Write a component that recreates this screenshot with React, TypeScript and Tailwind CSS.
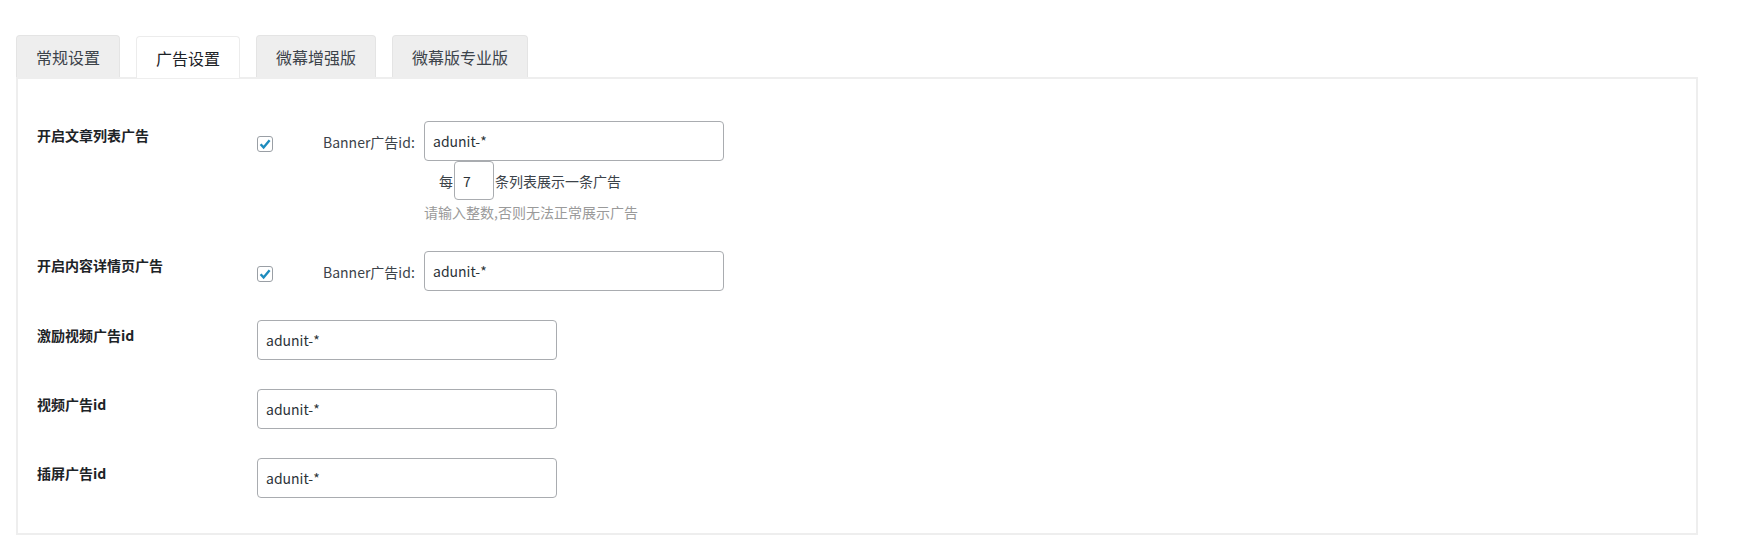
import React from "react";

function Checkbox() {
  return (
    <div className="mt-[15px] flex h-[16px] w-[16px] shrink-0 items-center justify-center rounded-[3px] border border-[#9a9fa5] bg-white">
      <svg width="14" height="14" viewBox="0 0 14 14">
        <polyline
          points="2.6,7.2 5.6,10.4 11.6,3.2"
          fill="none"
          stroke="#1e8cbe"
          strokeWidth="2.4"
          strokeLinecap="butt"
          strokeLinejoin="miter"
        />
      </svg>
    </div>
  );
}

function TextInput({ value, className = "" }: { value: string; className?: string }) {
  return (
    <input
      readOnly
      value={value}
      className={
        "box-border rounded-[4px] border border-[#a9acb0] bg-white px-[8px] text-[14px] text-[#2c3338] outline-none font-['Noto_Sans_CJK_SC',sans-serif] " +
        className
      }
    />
  );
}

function Tab({ label, active = false }: { label: string; active?: boolean }) {
  return (
    <div
      className={
        active
          ? "relative z-10 flex h-[42px] translate-y-[1px] items-center rounded-t-[4px] border border-b-0 border-[#ececec] bg-white px-[19px] text-[16px] text-[#1d2327]"
          : "flex h-[42px] items-center rounded-t-[4px] border border-b-0 border-[#e4e4e4] bg-[#eeeeee] px-[19px] text-[16px] text-[#3c434a]"
      }
    >
      {label}
    </div>
  );
}

function SimpleRow({ label }: { label: string }) {
  return (
    <div className="flex pt-[15px] pb-[14px]">
      <div className="w-[220px] pt-[6px] text-[14px] leading-[18px] font-bold text-[#1d2327]">{label}</div>
      <TextInput value="adunit-*" className="h-[40px] w-[300px]" />
    </div>
  );
}

export default function App() {
  return (
    <div className="min-h-[547px] w-full bg-white pt-[35px] pl-[16px] font-['Noto_Sans_CJK_SC',sans-serif] text-[14px] text-[#1d2327]">
      <div className="flex h-[42px] items-end gap-[16px]">
        <Tab label="常规设置" />
        <Tab label="广告设置" active />
        <Tab label="微幕增强版" />
        <Tab label="微幕版专业版" />
      </div>
      <div className="h-[458px] w-[1682px] border-2 border-[#eeeeee] bg-white pt-[27px] pl-[19px]">
        {/* Row 1 */}
        <div className="flex pt-[15px] pb-[15px]">
          <div className="w-[220px] pt-[5px] text-[14px] leading-[18px] font-bold">开启文章列表广告</div>
          <div className="flex items-start">
            <Checkbox />
            <div className="mt-[11px] ml-[50px] w-[101px] leading-[20px] text-[#3c434a]">Banner广告id:</div>
            <div className="flex flex-col">
              <TextInput value="adunit-*" className="h-[40px] w-[300px]" />
              <div className="flex items-center pl-[15px] text-[#3c434a]">
                <span className="w-[15px] leading-[20px]">每</span>
                <TextInput value="7" className="h-[39px] w-[40px]" />
                <span className="ml-[1px] leading-[20px]">条列表展示一条广告</span>
              </div>
              <div className="mt-[3px] leading-[18px] text-[#9a9a9a]">请输入整数,否则无法正常展示广告</div>
            </div>
          </div>
        </div>
        {/* Row 2 */}
        <div className="flex pt-[15px] pb-[14px]">
          <div className="w-[220px] pt-[5px] text-[14px] leading-[18px] font-bold">开启内容详情页广告</div>
          <div className="flex items-start">
            <Checkbox />
            <div className="mt-[11px] ml-[50px] w-[101px] leading-[20px] text-[#3c434a]">Banner广告id:</div>
            <TextInput value="adunit-*" className="h-[40px] w-[300px]" />
          </div>
        </div>
        <SimpleRow label="激励视频广告id" />
        <SimpleRow label="视频广告id" />
        <SimpleRow label="插屏广告id" />
      </div>
    </div>
  );
}
